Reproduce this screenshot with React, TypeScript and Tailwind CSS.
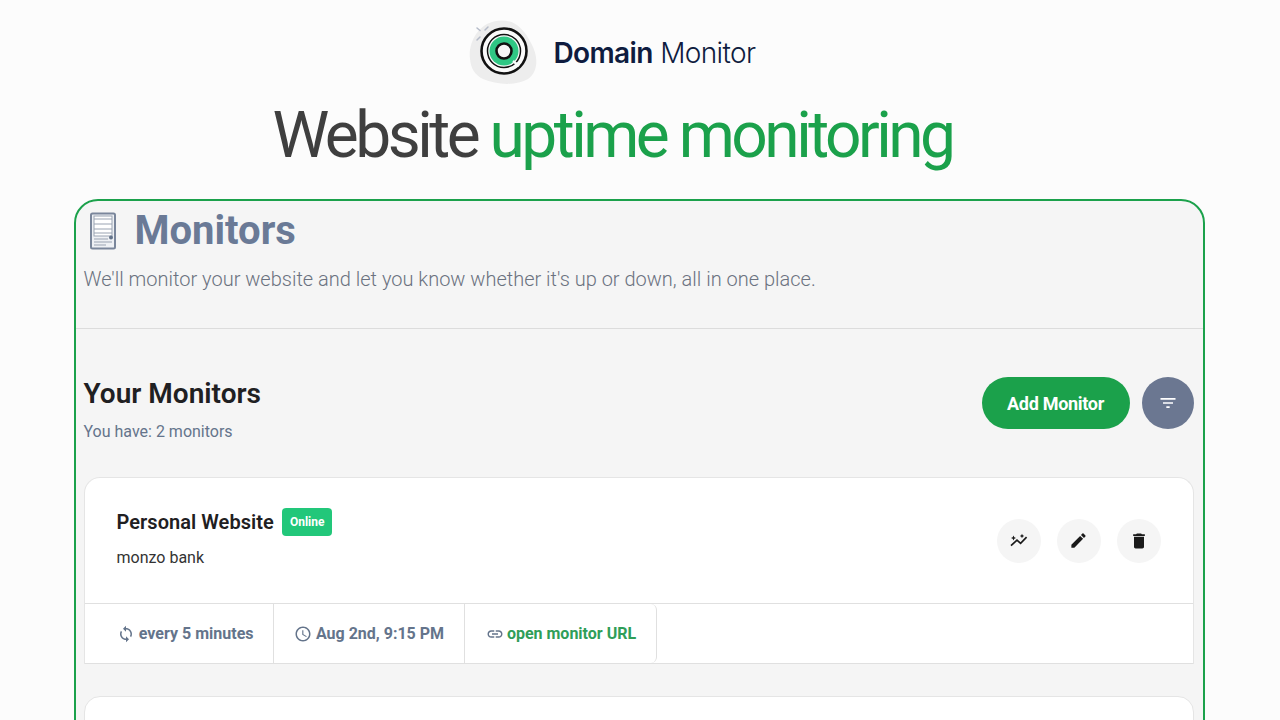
import { MdEdit, MdDelete, MdFilterList, MdSync, MdAccessTime, MdLink } from "react-icons/md";

function Logo() {
  return (
    <svg width="68" height="66" viewBox="0 0 68 66" className="shrink-0">
      <path d="M1 40C-1 24 9 5 27 2C43 -1 54 8 62 24C70 38 69 53 59 60C48 67 27 66 14 60C6 56 2 50 1 40Z" fill="#ededed" />
      <path d="M8 9l3 2.500M19 8l-3 3M8 21l3-3" stroke="#b4bac8" strokeWidth="1.500" strokeLinecap="round" />
      <circle cx="35" cy="32" r="22.500" fill="#fafafa" stroke="#111" strokeWidth="2.600" />
      <circle cx="35" cy="32" r="16.500" fill="#fafafa" stroke="#111" strokeWidth="1.500" />
      <circle cx="35" cy="32" r="14.500" fill="#2fc784" />
      <circle cx="35" cy="32" r="7.500" fill="#f6f6f6" stroke="#111" strokeWidth="2.600" />
      <path d="M44 42l6 5" stroke="#fafafa" strokeWidth="2.400" />
    </svg>
  );
}

function GraphIcon() {
  return (
    <svg width="20" height="20" viewBox="0 0 20 20" fill="currentColor">
      <path d="M2 14.600l6-5.400 3.600 3.200 6-6.200" fill="none" stroke="currentColor" strokeWidth="1.700" />
      <path d="M4.500 4.500l.8 1.700 1.700.8-1.700.8-.8 1.700-.8-1.700L2 7l1.700-.8z" />
      <path d="M13 2.800l.7 1.500 1.500.7-1.500.7-.7 1.500-.7-1.500-1.500-.7 1.500-.7z" />
    </svg>
  );
}

function RoundAction({ children }: { children: React.ReactNode }) {
  return (
    <button className="w-11 h-11 rounded-full bg-[#f5f5f5] flex items-center justify-center text-[#1a1a1a]">
      {children}
    </button>
  );
}

export default function App() {
  return (
    <div className="h-[720px] overflow-hidden bg-[#fcfcfc] font-['Roboto',sans-serif] flex flex-col items-center">
      <div className="w-full pr-[55px] flex flex-col items-center shrink-0">
        <header className="flex items-center h-[105px] shrink-0">
          <div className="flex items-center gap-[16px] -mt-[2px]">
            <Logo />
            <div className="font-['Inter',sans-serif] text-[28px] leading-none text-[#0f1c3f] tracking-[-0.6px] mt-[3px]">
              <span className="font-semibold">Domain</span> <span className="font-light">Monitor</span>
            </div>
          </div>
        </header>
        <h1 className="text-[64px] leading-[60px] tracking-[-3.5px] text-[#3f3f3f] font-normal h-[94px] pt-[1px] shrink-0">
          Website <span className="text-[#1ba14b]">uptime monitoring</span>
        </h1>
      </div>
      <main className="w-[1131px] shrink-0 -ml-[2px] border-2 border-[#1ba14b] rounded-[24px] bg-[#f5f5f5]">
        <section className="h-[128px] border-b border-[#dcdcdc] px-2 pt-[5px]">
          <div className="flex items-center h-[50px]">
            <svg width="32" height="38" viewBox="0 0 32 38" className="ml-[3px] mr-[16px] shrink-0">
              <rect x="4" y="1.500" width="24" height="35" rx="1.500" fill="#eef0f4" stroke="#7a869b" strokeWidth="2" />
              <rect x="7" y="4" width="18" height="20" fill="#fff" stroke="#9aa3b2" strokeWidth="1" />
              <path d="M7 7h18M7 12h18M7 17h18M7 21h18M7 27h14M7 30h18M7 33h12" stroke="#9aa3b2" strokeWidth="1" />
              <circle cx="24" cy="25.500" r="2" fill="#64748b" />
            </svg>
            <h2 className="text-[40px] leading-none font-bold text-[#6a7a96]">Monitors</h2>
          </div>
          <p className="mt-[9px] text-[20px] leading-7 font-light text-[#6b7280]">
            We'll monitor your website and let you know whether it's up or down, all in one place.
          </p>
        </section>
        <section className="px-2">
          <div className="flex items-start justify-between pt-12">
            <div className="pt-[1px]">
              <h3 className="text-[28px] leading-[32px] font-semibold text-[#1f2022]">Your Monitors</h3>
              <p className="mt-[10px] text-base leading-6 text-[#64748b]">You have: 2 monitors</p>
            </div>
            <div className="flex gap-3 mr-[1px]">
              <button className="w-[148px] h-[52px] pt-[1px] rounded-full bg-[#1ba14b] text-white font-bold text-lg tracking-[-0.3px]">
                Add Monitor
              </button>
              <button className="w-[52px] h-[52px] rounded-full bg-[#6b7791] flex items-center justify-center text-white">
                <MdFilterList size={20} />
              </button>
            </div>
          </div>

          <article className="mt-[33px] mr-[1px] bg-white border-x border-t border-[#e5e5e5] rounded-t-2xl">
            <div className="h-[126px] flex items-center justify-between pl-8 pr-8 border-b border-[#e0e0e0]">
              <div className="-mt-[4px]">
                <div className="flex items-center gap-2">
                  <span className="text-xl leading-7 font-semibold text-[#1f2022] tracking-[0.05px]">Personal Website</span>
                  <span className="h-7 px-2 rounded bg-[#22c77a] text-white text-xs font-bold flex items-center">Online</span>
                </div>
                <p className="mt-[10px] text-base leading-6 text-[#333]">monzo bank</p>
              </div>
              <div className="flex gap-4">
                <RoundAction><GraphIcon /></RoundAction>
                <RoundAction><MdEdit size={19} /></RoundAction>
                <RoundAction><MdDelete size={20} /></RoundAction>
              </div>
            </div>
            <div className="flex h-[60px] text-base font-bold text-[#64748b] border-b border-[#e0e0e0]">
              <div className="w-[189px] flex items-center justify-end pr-[19px] gap-[4px] border-r border-[#e0e0e0]">
                <MdSync size={18} /> <span>every 5 minutes</span>
              </div>
              <div className="w-[191px] flex items-center justify-center pl-[1px] gap-[4px] border-r border-[#e0e0e0]">
                <MdAccessTime size={18} /> <span>Aug 2nd, 9:15 PM</span>
              </div>
              <div className="w-[192px] flex items-center justify-center pl-[2px] gap-[3px] border-r border-[#e0e0e0] rounded-r-md">
                <MdLink size={18} /> <span className="text-[#2f9e58]">open monitor URL</span>
              </div>
            </div>
          </article>

          <article className="mt-[32px] mr-[1px] h-[100px] bg-white border border-[#e5e5e5] rounded-2xl" />
        </section>
      </main>
    </div>
  );
}
